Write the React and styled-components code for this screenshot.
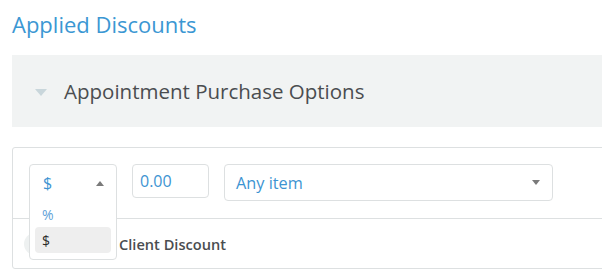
import React from 'react';
import styled, { createGlobalStyle } from 'styled-components';

const GlobalStyle = createGlobalStyle`
    html, body {
        margin: 0;
        background: #fff;
        overflow: hidden;
        font-family: 'Open Sans', 'Liberation Sans', sans-serif;
    }
`;

const Page = styled.div`
    width: 640px;
    padding: 10px 0 0 12px;
`;

const Title = styled.h2`
    margin: 0;
    font-size: 22px;
    line-height: 28px;
    font-weight: 400;
    color: #3b97d3;
`;

const GroupHeader = styled.div`
    display: flex;
    align-items: center;
    gap: 17px;
    height: 72px;
    margin-top: 17px;
    padding-left: 23px;
    background-color: #f1f3f3;
    font-size: 20.5px;
    color: #4a4d50;
`;

const Caret = styled.span`
    width: 0;
    height: 0;
    border-left: 6px solid transparent;
    border-right: 6px solid transparent;
    border-top: 7px solid #c9d6db;
    margin-top: 2px;
`;

const Card = styled.div`
    margin-top: 20px;
    border: 1px solid #dde0e1;
    border-radius: 3px;
`;

const Row = styled.div`
    display: flex;
    align-items: ${p => (p.$top ? 'flex-start' : 'center')};
    gap: 15px;
    height: ${p => p.$h}px;
    padding: ${p => (p.$top ? '16px 16px 0' : '0 11px')};
    box-sizing: border-box;
    & + & {
        border-top: 1px solid #dde0e1;
    }
`;

const SelectWrap = styled.div`
    position: relative;
    width: 88px;
    height: 37px;
    flex: none;
`;

const OpenMenu = styled.div`
    position: absolute;
    top: 0;
    left: 0;
    right: 0;
    z-index: 5;
    background: #fff;
    border: 1px solid #dde0e1;
    border-radius: 4px;
    padding-bottom: 6px;
`;

const Current = styled.div`
    display: flex;
    align-items: center;
    justify-content: space-between;
    height: 36px;
    padding: 0 12px 0 13px;
    font-size: 16px;
    color: #3d94d2;
`;

const ArrowUp = styled.span`
    width: 0;
    height: 0;
    border-left: 4px solid transparent;
    border-right: 4px solid transparent;
    border-bottom: 5px solid #7a7a7a;
`;

const ArrowDown = styled.span`
    width: 0;
    height: 0;
    border-left: 4px solid transparent;
    border-right: 4px solid transparent;
    border-top: 5px solid #7a7a7a;
`;

const Option = styled.div`
    height: 26px;
    margin: 0 5px;
    padding-left: 7px;
    display: flex;
    align-items: center;
    border-radius: 4px;
    font-size: 14px;
    color: ${p => (p.$active ? '#2b2b2b' : '#5fa2d8')};
    background: ${p => (p.$active ? '#eeeeee' : 'transparent')};
`;

const AmountInput = styled.div`
    width: 77px;
    height: 34px;
    box-sizing: border-box;
    border: 1px solid #dde0e1;
    border-radius: 4px;
    padding-left: 7px;
    display: flex;
    align-items: center;
    font-size: 16px;
    color: #3d94d2;
    flex: none;
`;

const ItemSelect = styled.div`
    width: 329px;
    height: 37px;
    box-sizing: border-box;
    border: 1px solid #dde0e1;
    border-radius: 4px;
    padding: 0 12px 0 11px;
    display: flex;
    align-items: center;
    justify-content: space-between;
    font-size: 16.3px;
    color: #3d94d2;
    flex: none;
`;

const Toggle = styled.span`
    width: 40px;
    height: 22px;
    border-radius: 11px;
    background: #eef1f1;
    flex: none;
`;

const Label = styled.span`
    margin-left: 40px;
    font-size: 14.6px;
    font-weight: 600;
    color: #4a4d50;
`;

export default function App() {
    return (
        <>
            <GlobalStyle />
            <Page>
                <Title>Applied Discounts</Title>
                <GroupHeader>
                    <Caret />
                    Appointment Purchase Options
                </GroupHeader>
                <Card>
                    <Row $top $h={70}>
                        <SelectWrap>
                            <OpenMenu>
                                <Current>$<ArrowUp /></Current>
                                <Option>%</Option>
                                <Option $active>$</Option>
                            </OpenMenu>
                        </SelectWrap>
                        <AmountInput>0.00</AmountInput>
                        <ItemSelect>Any item<ArrowDown /></ItemSelect>
                    </Row>
                    <Row $h={50}>
                        <Toggle />
                        <Label>Client Discount</Label>
                    </Row>
                </Card>
            </Page>
        </>
    );
}
